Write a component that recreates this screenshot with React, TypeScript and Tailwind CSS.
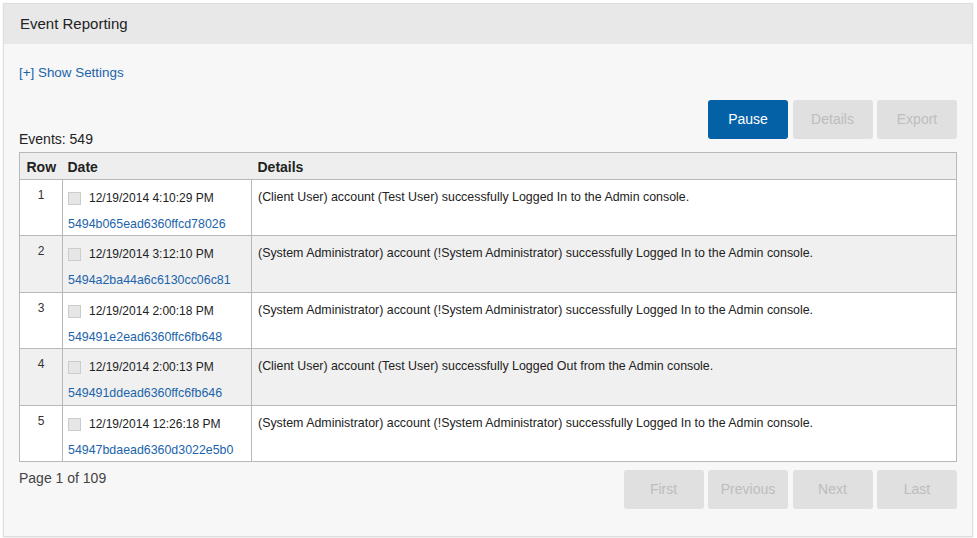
import React from 'react'

const events: { row: number; date: string; id: string; details: string }[] = [
  { row: 1, date: '12/19/2014 4:10:29 PM', id: '5494b065ead6360ffcd78026', details: '(Client User) account (Test User) successfully Logged In to the Admin console.' },
  { row: 2, date: '12/19/2014 3:12:10 PM', id: '5494a2ba44a6c6130cc06c81', details: '(System Administrator) account (!System Administrator) successfully Logged In to the Admin console.' },
  { row: 3, date: '12/19/2014 2:00:18 PM', id: '549491e2ead6360ffc6fb648', details: '(System Administrator) account (!System Administrator) successfully Logged In to the Admin console.' },
  { row: 4, date: '12/19/2014 2:00:13 PM', id: '549491ddead6360ffc6fb646', details: '(Client User) account (Test User) successfully Logged Out from the Admin console.' },
  { row: 5, date: '12/19/2014 12:26:18 PM', id: '54947bdaead6360d3022e5b0', details: '(System Administrator) account (!System Administrator) successfully Logged In to the Admin console.' }
]

function Btn({ label, primary }: { label: string; primary?: boolean }) {
  return (
    <button
      className={
        primary
          ? 'w-[80px] h-[39px] rounded-[3px] bg-[#0561a6] text-white text-[14px]'
          : 'w-[80px] h-[39px] rounded-[3px] bg-[#e0e0e0] text-[#bdbdbd] text-[14px]'
      }
    >
      {label}
    </button>
  )
}

export default function App() {
  return (
    <div className="bg-white w-[977px] h-[538px] pt-[3px] pl-[3px] font-['Liberation_Sans',Arial,sans-serif] text-[#333]">
      <div className="w-[970px] h-[534px] border border-[#dddddd] bg-[#f7f7f7] shadow-[0_1px_2px_rgba(0,0,0,0.08)]">
        {/* Panel header */}
        <div className="h-[40px] bg-[#e8e8e8] flex items-center px-[16px] text-[15px] text-[#222]">
          Event Reporting
        </div>

        <div className="px-[15px]">
          <div className="pt-[21px] text-[13.4px] leading-[16px] text-[#1a64ab]">[+] Show Settings</div>

          {/* Events count + actions */}
          <div className="mt-[19px] flex items-end justify-between w-[938px]">
            <div className="text-[14px] leading-[20px] pb-[3px] text-[#222]">Events: 549</div>
            <div className="flex gap-[4.5px] pb-[13px]">
              <Btn label="Pause" primary />
              <Btn label="Details" />
              <Btn label="Export" />
            </div>
          </div>

          <table className="w-[938px] border-collapse border border-[#b8b8b8] table-fixed">
            <colgroup>
              <col className="w-[43px]" />
              <col className="w-[189px]" />
              <col />
            </colgroup>
            <thead>
              <tr className="bg-[#eeeeee] h-[27px] text-[14px] font-bold text-[#222]">
                <th className="text-center pt-[3px] border-b border-[#b8b8b8]">Row</th>
                <th className="text-left pl-[5px] pt-[3px] border-b border-[#b8b8b8]">Date</th>
                <th className="text-left pl-[6px] pt-[3px] border-b border-[#b8b8b8]">Details</th>
              </tr>
            </thead>
            <tbody>
              {events.map((e) => (
                <tr key={e.row} className={e.row % 2 === 0 ? 'bg-[#f0f0f0]' : 'bg-white'}>
                  <td className="align-top text-center text-[12px] leading-[14px] pt-[8px] border border-[#b8b8b8]">
                    {e.row}
                  </td>
                  <td
                    className={
                      e.row % 2 === 0
                        ? 'align-top pl-[5px] pt-[10px] pb-[4px] border border-[#b8b8b8] text-[12px]'
                        : 'align-top pl-[5px] pt-[10px] pb-[3px] border border-[#b8b8b8] text-[12px]'
                    }
                  >
                    <div className="h-[16px] flex items-center">
                      <span className="w-[13px] h-[13px] bg-[#e6e6e6] border border-[#cccccc] mr-[8px]" />
                      <span className="text-[#222]">{e.date}</span>
                    </div>
                    <div className="mt-[10px] h-[16px] leading-[16px] text-[12.4px] text-[#1a64ab]">{e.id}</div>
                  </td>
                  <td className="align-top pl-[6px] pt-[9px] text-[12.4px] leading-[16px] text-[#222] border border-[#b8b8b8]">
                    {e.details}
                  </td>
                </tr>
              ))}
            </tbody>
          </table>

          <div className="flex justify-between w-[938px] mt-[8px]">
            <div className="text-[14px] leading-[16px] text-[#444]">Page 1 of 109</div>
            <div className="flex gap-[4.5px]">
              <Btn label="First" />
              <Btn label="Previous" />
              <Btn label="Next" />
              <Btn label="Last" />
            </div>
          </div>
        </div>
      </div>
    </div>
  )
}
